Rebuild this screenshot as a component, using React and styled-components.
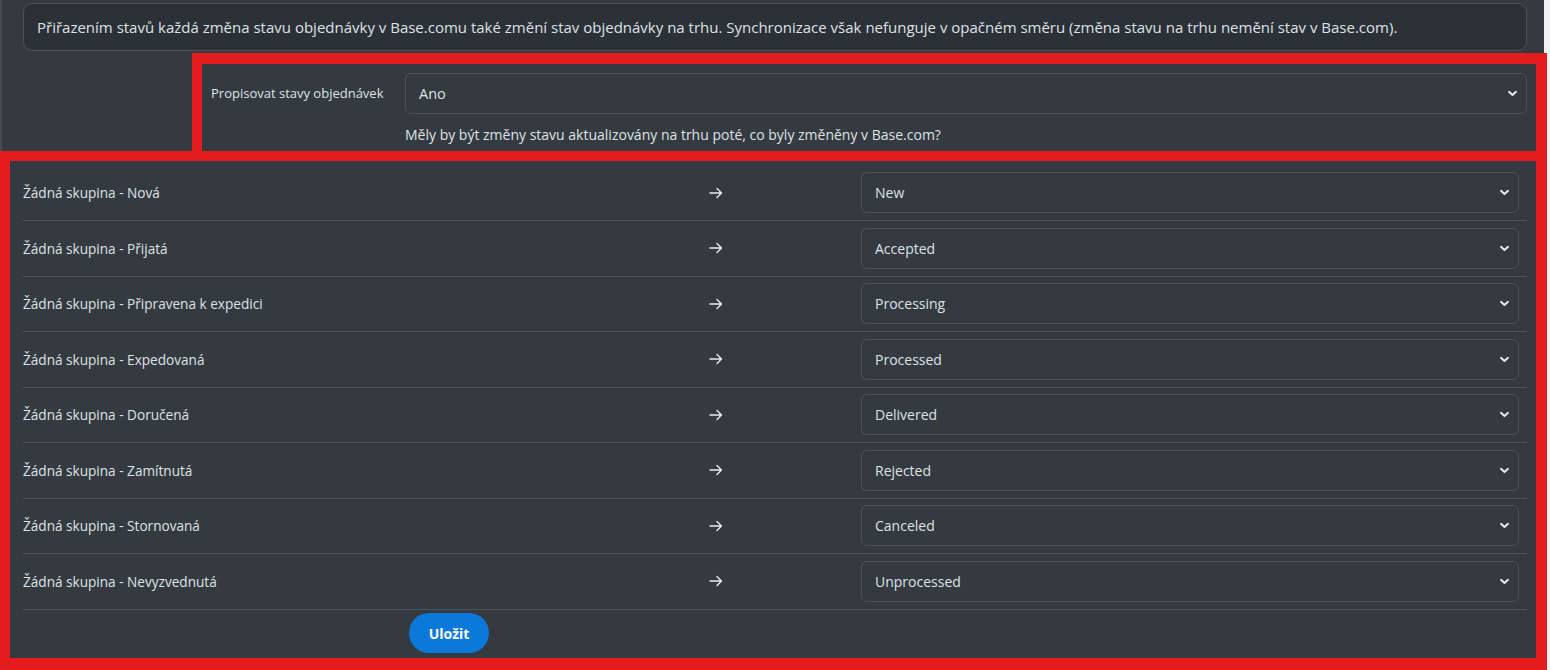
import React from 'react'
import styled, { createGlobalStyle } from 'styled-components'

const TEXT = '#dee2e6'
const LINE = '#4d535b'
const RED = '#e31c1c'

const GlobalStyle = createGlobalStyle`
  html, body {
    margin: 0;
    padding: 0;
    background: #f3f3f3;
  }
  body {
    font-family: 'Open Sans', 'Noto Sans', sans-serif;
    color: ${TEXT};
    overflow: hidden;
  }
`

const Root = styled.div`
  position: relative;
  width: 1550px;
  height: 670px;
`

const Page = styled.div`
  width: 1544px;
  height: 670px;
  box-sizing: border-box;
  background: #343a40;
  border-left: 2px solid #474c53;
  padding: 3px 17px 0 21px;
`

const InfoBox = styled.div`
  height: 48px;
  box-sizing: border-box;
  display: flex;
  align-items: center;
  padding: 0 13px;
  background: #2c3037;
  border: 1px solid ${LINE};
  border-radius: 9px;
  font-size: 15px;
`

const FormRow = styled.div`
  display: grid;
  grid-template-columns: 194px 1fr;
  margin-top: 22px;
  padding-left: 188px;
`

const FormLabel = styled.div`
  font-size: 13px;
  line-height: 41px;
`

const SelectBox = styled.div`
  height: 41px;
  box-sizing: border-box;
  display: flex;
  align-items: center;
  justify-content: space-between;
  padding: 0 8px 0 13px;
  border: 1px solid ${LINE};
  border-radius: 6px;
  background: #343a40;
  font-size: ${(p) => p.$size || 14}px;
  color: ${TEXT};
`

const Help = styled.div`
  margin-top: 10px;
  font-size: 14px;
  line-height: 21px;
`

const Table = styled.div`
  margin-top: 20.5px;
`

const Row = styled.div`
  display: grid;
  grid-template-columns: 659px 68px 1fr;
  align-items: center;
  height: 55.5px;
  box-sizing: border-box;
  border-bottom: 1px solid ${LINE};
  font-size: 13.6px;
`

const Arrow = styled.div`
  display: flex;
  justify-content: center;
`

const SelectCell = styled.div`
  padding: 0 8px 0 111px;
`

const Footer = styled.div`
  padding: 3.5px 0 0 386px;
`

const SaveButton = styled.button`
  width: 80px;
  height: 40px;
  border: none;
  border-radius: 20px;
  background: #0b79d9;
  color: #fff;
  font-family: 'Open Sans', 'Noto Sans', sans-serif;
  font-weight: 700;
  font-size: 14px;
  padding: 0;
`

const Frame = styled.div`
  position: absolute;
  left: ${(p) => p.$x}px;
  top: ${(p) => p.$y}px;
  width: ${(p) => p.$w}px;
  height: ${(p) => p.$h}px;
  box-sizing: border-box;
  border: solid ${RED};
  border-width: ${(p) => p.$bw};
  pointer-events: none;
`

const Chevron = () => (
  <svg width="11" height="7" viewBox="0 0 11 7">
    <polyline
      points="2,1.8 5.5,5 9,1.8"
      fill="none"
      stroke="#e9ecef"
      strokeWidth="1.9"
      strokeLinecap="round"
      strokeLinejoin="round"
    />
  </svg>
)

const ArrowIcon = () => (
  <svg width="14" height="12" viewBox="0 0 14 12">
    <path
      d="M1 6 H12.5 M8 1.5 L12.5 6 L8 10.5"
      fill="none"
      stroke="#e9ecef"
      strokeWidth="1.4"
      strokeLinecap="round"
      strokeLinejoin="round"
    />
  </svg>
)

const Select = ({ value, size }) => (
  <SelectBox $size={size}>
    <span>{value}</span>
    <Chevron />
  </SelectBox>
)

const mapping = [
  ['Žádná skupina - Nová', 'New'],
  ['Žádná skupina - Přijatá', 'Accepted'],
  ['Žádná skupina - Připravena k expedici', 'Processing'],
  ['Žádná skupina - Expedovaná', 'Processed'],
  ['Žádná skupina - Doručená', 'Delivered'],
  ['Žádná skupina - Zamítnutá', 'Rejected'],
  ['Žádná skupina - Stornovaná', 'Canceled'],
  ['Žádná skupina - Nevyzvednutá', 'Unprocessed'],
]

export default function App() {
  return (
    <Root>
      <GlobalStyle />
      <Page>
        <InfoBox>
          Přiřazením stavů každá změna stavu objednávky v Base.comu také změní stav objednávky na trhu. Synchronizace však nefunguje v opačném směru (změna stavu na trhu nemění stav v Base.com).
        </InfoBox>
        <FormRow>
          <FormLabel>Propisovat stavy objednávek</FormLabel>
          <div>
            <Select value="Ano" size={14.5} />
            <Help>Měly by být změny stavu aktualizovány na trhu poté, co byly změněny v Base.com?</Help>
          </div>
        </FormRow>
        <Table>
          {mapping.map(([from, to]) => (
            <Row key={from}>
              <div>{from}</div>
              <Arrow>
                <ArrowIcon />
              </Arrow>
              <SelectCell>
                <Select value={to} />
              </SelectCell>
            </Row>
          ))}
        </Table>
        <Footer>
          <SaveButton>Uložit</SaveButton>
        </Footer>
      </Page>
      <Frame $x={192} $y={53} $w={1355} $h={108} $bw="11px 11px 10px 10px" />
      <Frame $x={0} $y={151} $w={1547} $h={519} $bw="10px 11px 12px 10px" />
    </Root>
  )
}
